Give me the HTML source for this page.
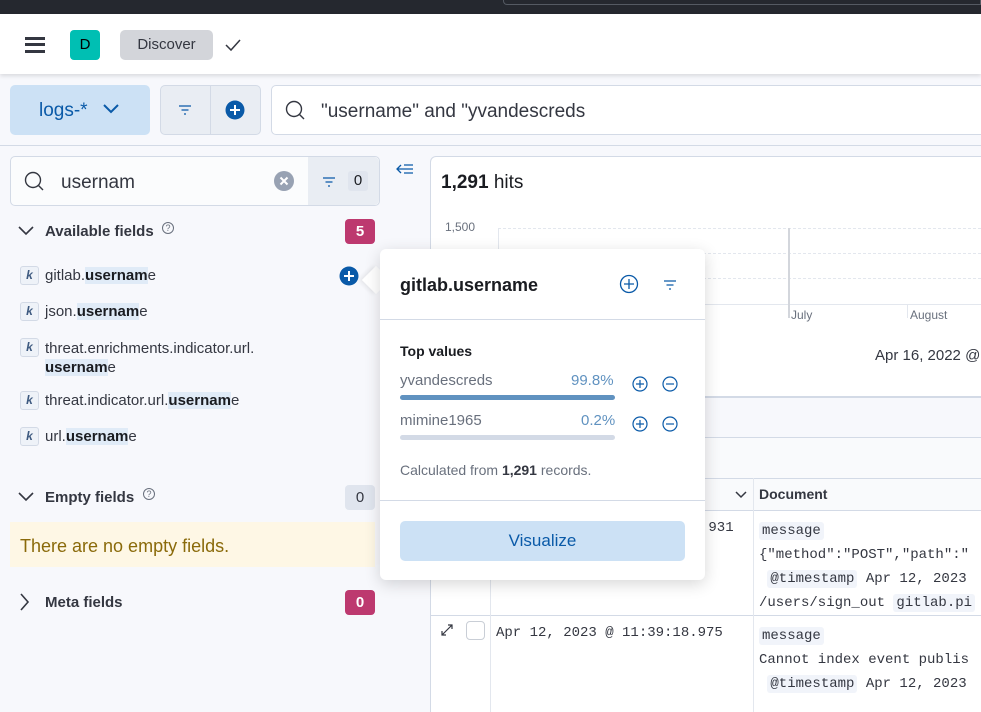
<!DOCTYPE html>
<html style="width:981px;height:712px;overflow:hidden"><head><meta charset="utf-8"><style>
*{box-sizing:border-box;margin:0;padding:0}
body{width:981px;height:712px;overflow:hidden;background:#f7f8fc;font-family:"Liberation Sans",sans-serif;color:#343741;position:relative}
.a{position:absolute}
.mono{font-family:"Liberation Mono",monospace}
.hl{background:#e0ebf7;font-weight:bold;color:#1a1c21}
.k{position:absolute;left:20px;width:19px;height:19px;border:1px solid #d3dae6;border-radius:3px;background:#eef2f8;color:#3e5a80;font-size:12px;font-weight:bold;font-style:italic;text-align:center;line-height:17px}
.fl{position:absolute;left:45px;font-size:15px;color:#343741}
.sec{position:absolute;left:45px;font-size:15px;font-weight:bold;color:#343741}
.badge{position:absolute;left:345px;width:30px;height:25px;border-radius:4px;text-align:center;line-height:25px;font-size:15px;font-weight:bold}
.tag{background:#f1f4fa;border-radius:3px;padding:1px 3px}
</style></head><body>
<div class="a" style="left:0;top:0;width:981px;height:14px;background:#25282f"></div>
<div class="a" style="left:503px;top:0;width:478px;height:5px;border:1px solid #555a63;border-top:none;border-radius:0 0 0 4px"></div>
<div class="a" style="left:0;top:14px;width:981px;height:60px;background:#fff;box-shadow:0 2px 4px rgba(0,0,0,.12)"></div>
<div class="a" style="left:25px;top:37px;width:20px;height:3px;background:#343741"></div>
<div class="a" style="left:25px;top:43px;width:20px;height:3px;background:#343741"></div>
<div class="a" style="left:25px;top:50px;width:20px;height:3px;background:#343741"></div>
<div class="a" style="left:70px;top:30px;width:30px;height:30px;border-radius:4px;background:#00bfb3;font-size:15px;text-align:center;line-height:30px;color:#000">D</div>
<div class="a" style="left:120px;top:30px;width:93px;height:30px;border-radius:5px;background:#d3d5da;font-size:15px;text-align:center;line-height:30px;color:#343741">Discover</div>
<svg class="a" style="left:224px;top:37px" width="18" height="16"><path d="M2 8l5 5 9-10" fill="none" stroke="#343741" stroke-width="1.5"/></svg>

<div class="a" style="left:10px;top:85px;width:140px;height:50px;border-radius:5px;background:#cce1f5;color:#0b64dd"></div>
<div class="a" style="left:39px;top:100px;font-size:19px;color:#0a5aa8">logs-*</div>
<svg class="a" style="left:102px;top:103px" width="18" height="12"><path d="M2 2l7 7 7-7" fill="none" stroke="#0a5aa8" stroke-width="2"/></svg>
<div class="a" style="left:160px;top:85px;width:101px;height:50px;border-radius:5px;background:#e9edf3;border:1px solid #d3dae6"></div>
<div class="a" style="left:210px;top:86px;width:1px;height:48px;background:#d3dae6"></div>
<svg class="a" style="left:177px;top:104px" width="16" height="12"><path d="M2 2h12M4.5 6h7M7 10h2" stroke="#0a5aa8" stroke-width="1.3"/></svg>
<svg class="a" style="left:225px;top:100px" width="20" height="20"><circle cx="10" cy="10" r="9.5" fill="#0a5aa8"/><path d="M10 5v10M5 10h10" stroke="#fff" stroke-width="2"/></svg>
<div class="a" style="left:271px;top:85px;width:720px;height:50px;border-radius:5px;background:#fff;border:1px solid #d3dae6"></div>
<svg class="a" style="left:285px;top:100px" width="22" height="22"><circle cx="9" cy="9" r="7.5" fill="none" stroke="#343741" stroke-width="1.4"/><path d="M14 14l5 5" stroke="#343741" stroke-width="1.4"/></svg>
<div class="a" style="left:321px;top:101px;font-size:19px;color:#343741">"username" and "yvandescreds</div>
<div class="a" style="left:0;top:145px;width:981px;height:1px;background:#d3dae6"></div>

<div class="a" style="left:10px;top:156px;width:370px;height:50px;border-radius:5px;background:#fbfcfd;border:1px solid #d3dae6"></div>
<div class="a" style="left:308px;top:157px;width:71px;height:48px;background:#e9edf3;border-radius:0 5px 5px 0"></div>
<svg class="a" style="left:24px;top:171px" width="22" height="22"><circle cx="9" cy="9" r="7.5" fill="none" stroke="#343741" stroke-width="1.4"/><path d="M14 14l5 5" stroke="#343741" stroke-width="1.4"/></svg>
<div class="a" style="left:61px;top:172px;font-size:19px;color:#343741">usernam</div>
<svg class="a" style="left:274px;top:171px" width="20" height="20"><circle cx="10" cy="10" r="10" fill="#98a2b3"/><path d="M6.5 6.5l7 7M13.5 6.5l-7 7" stroke="#fff" stroke-width="2"/></svg>
<svg class="a" style="left:321px;top:176px" width="16" height="12"><path d="M2 2h12M4.5 6h7M7 10h2" stroke="#0a5aa8" stroke-width="1.3"/></svg>
<div class="a" style="left:348px;top:171px;width:20px;height:20px;background:#e0e5ee;border-radius:3px;font-size:15px;text-align:center;line-height:20px;color:#1a1c21">0</div>
<svg class="a" style="left:395px;top:163px" width="20" height="14"><path d="M6 2L2 6l4 4M2 6h16M9 2h9M9 10h9" fill="none" stroke="#0a5aa8" stroke-width="1.3"/></svg>

<svg class="a" style="left:17px;top:225px" width="18" height="12"><path d="M2 2l7 7 7-7" fill="none" stroke="#343741" stroke-width="1.6"/></svg>
<div class="sec" style="top:223px">Available fields</div>
<div class="a" style="left:162px;top:222px;width:12px;height:12px;border:1px solid #69707d;border-radius:50%;font-size:9px;text-align:center;line-height:10px;color:#69707d">?</div>
<div class="badge" style="top:219px;background:#bd396f;color:#fff">5</div>

<div class="k" style="top:266px">k</div><div class="fl" style="top:267px">gitlab.<span class="hl">usernam</span>e</div>
<svg class="a" style="left:339px;top:266px" width="20" height="20"><circle cx="10" cy="10" r="9.5" fill="#0a5aa8"/><path d="M10 5v10M5 10h10" stroke="#fff" stroke-width="2"/></svg>
<div class="k" style="top:302px">k</div><div class="fl" style="top:303px">json.<span class="hl">usernam</span>e</div>
<div class="k" style="top:338px">k</div><div class="fl" style="top:339px;line-height:19px">threat.enrichments.indicator.url.<br><span class="hl">usernam</span>e</div>
<div class="k" style="top:391px">k</div><div class="fl" style="top:392px">threat.indicator.url.<span class="hl">usernam</span>e</div>
<div class="k" style="top:427px">k</div><div class="fl" style="top:428px">url.<span class="hl">usernam</span>e</div>

<svg class="a" style="left:17px;top:491px" width="18" height="12"><path d="M2 2l7 7 7-7" fill="none" stroke="#343741" stroke-width="1.6"/></svg>
<div class="sec" style="top:489px">Empty fields</div>
<div class="a" style="left:143px;top:488px;width:12px;height:12px;border:1px solid #69707d;border-radius:50%;font-size:9px;text-align:center;line-height:10px;color:#69707d">?</div>
<div class="badge" style="top:485px;background:#e0e5ee;color:#343741;font-weight:normal">0</div>
<div class="a" style="left:10px;top:522px;width:365px;height:45px;background:#fef7e5"></div>
<div class="a" style="left:20px;top:536px;font-size:18px;color:#8a6a0a">There are no empty fields.</div>
<svg class="a" style="left:18px;top:592px" width="12" height="20"><path d="M3 2l7 8-7 8" fill="none" stroke="#343741" stroke-width="1.6"/></svg>
<div class="sec" style="top:594px">Meta fields</div>
<div class="badge" style="top:590px;background:#bd396f;color:#fff">0</div>

<div class="a" style="left:430px;top:156px;width:560px;height:556px;background:#fff;border:1px solid #d3dae6;border-bottom:none;border-radius:6px 6px 0 0"></div>
<div class="a" style="left:441px;top:172px;font-size:19px;color:#1a1c21"><b>1,291</b> hits</div>
<div class="a" style="left:445px;top:220px;font-size:12px;color:#69707d">1,500</div>
<div class="a" style="left:498px;top:228px;width:483px;border-top:1px dashed #e3e7ee"></div>
<div class="a" style="left:498px;top:253px;width:483px;border-top:1px dashed #e3e7ee"></div>
<div class="a" style="left:498px;top:278px;width:483px;border-top:1px dashed #e3e7ee"></div>
<div class="a" style="left:498px;top:228px;width:1px;height:76px;background:#e3e7ee"></div>
<div class="a" style="left:498px;top:304px;width:483px;height:1px;background:#e3e7ee"></div>
<div class="a" style="left:788px;top:228px;width:2px;height:90px;background:#d3d6dc"></div>
<div class="a" style="left:791px;top:308px;font-size:12px;color:#69707d">July</div>
<div class="a" style="left:907px;top:304px;width:1px;height:14px;background:#e3e7ee"></div>
<div class="a" style="left:910px;top:308px;font-size:12px;color:#69707d">August</div>
<div class="a" style="left:875px;top:347px;font-size:15px;color:#343741">Apr 16, 2022 @</div>
<div class="a" style="left:431px;top:396px;width:550px;height:2px;background:#d3dae6"></div>
<div class="a" style="left:431px;top:398px;width:550px;height:39px;background:#f7f8fc"></div>
<div class="a" style="left:431px;top:437px;width:550px;height:1px;background:#d3dae6"></div>
<div class="a" style="left:431px;top:438px;width:550px;height:40px;background:#f9fafc"></div>
<div class="a" style="left:431px;top:478px;width:550px;height:1px;background:#d3dae6"></div>
<div class="a" style="left:431px;top:479px;width:550px;height:31px;background:#f9fafc"></div>
<div class="a" style="left:431px;top:510px;width:550px;height:1px;background:#d3dae6"></div>
<div class="a" style="left:431px;top:615px;width:550px;height:1px;background:#d3dae6"></div>
<div class="a" style="left:490px;top:478px;width:1px;height:234px;background:#e3e7ee"></div>
<div class="a" style="left:753px;top:478px;width:1px;height:234px;background:#e3e7ee"></div>
<svg class="a" style="left:734px;top:490px" width="14" height="10"><path d="M2 2l5 5 5-5" fill="none" stroke="#343741" stroke-width="1.5"/></svg>
<div class="a" style="left:759px;top:486px;font-size:14px;font-weight:bold;color:#343741">Document</div>
<div class="a mono" style="left:700px;top:520px;font-size:14px;color:#343741">.931</div>
<div class="a mono" style="left:759px;top:519px;font-size:14px;line-height:24px;color:#343741;white-space:nowrap"><span class="tag">message</span><br>{"method":"POST","path":"<br>&nbsp;<span class="tag">@timestamp</span> Apr 12, 2023<br>/users/sign_out <span class="tag">gitlab.pi</span></div>
<svg class="a" style="left:440px;top:623px" width="14" height="14"><path d="M2 12L12 2M8 2h4v4M2 8v4h4" fill="none" stroke="#343741" stroke-width="1.2"/></svg>
<div class="a" style="left:466px;top:621px;width:19px;height:19px;border:1px solid #c9ced6;border-radius:4px;background:#fff"></div>
<div class="a mono" style="left:496px;top:625px;font-size:14px;color:#343741">Apr 12, 2023 @ 11:39:18.975</div>
<div class="a mono" style="left:759px;top:624px;font-size:14px;line-height:24px;color:#343741;white-space:nowrap"><span class="tag">message</span><br>Cannot index event publis<br>&nbsp;<span class="tag">@timestamp</span> Apr 12, 2023</div>

<div class="a" style="left:366px;top:270px;width:20px;height:20px;background:#fff;transform:rotate(45deg);box-shadow:-2px 2px 4px rgba(0,0,0,.08)"></div>
<div class="a" style="left:380px;top:249px;width:325px;height:331px;background:#fff;border-radius:6px;box-shadow:0 4px 16px rgba(0,0,0,.16)"></div>
<div class="a" style="left:400px;top:275px;font-size:18px;font-weight:bold;color:#1a1c21">gitlab.username</div>
<svg class="a" style="left:619px;top:274px" width="20" height="20"><circle cx="10" cy="10" r="8.5" fill="none" stroke="#0a5aa8" stroke-width="1.3"/><path d="M10 5v10M5 10h10" stroke="#0a5aa8" stroke-width="1.3"/></svg>
<svg class="a" style="left:662px;top:279px" width="16" height="12"><path d="M2 2h12M4.5 6h7M7 10h2" stroke="#0a5aa8" stroke-width="1.3"/></svg>
<div class="a" style="left:380px;top:319px;width:325px;height:1px;background:#d3dae6"></div>
<div class="a" style="left:400px;top:343px;font-size:14px;font-weight:bold;color:#1a1c21">Top values</div>
<div class="a" style="left:400px;top:372px;font-size:15px;color:#69707d">yvandescreds</div>
<div class="a" style="left:571px;top:372px;font-size:15px;color:#6092c0">99.8%</div>
<div class="a" style="left:400px;top:395px;width:215px;height:5px;border-radius:3px;background:#6092c0"></div>
<div class="a" style="left:400px;top:412px;font-size:15px;color:#69707d">mimine1965</div>
<div class="a" style="left:581px;top:412px;font-size:15px;color:#6092c0">0.2%</div>
<div class="a" style="left:400px;top:435px;width:215px;height:5px;border-radius:3px;background:#d3dae6"></div>
<svg class="a" style="left:632px;top:376px" width="16" height="16"><circle cx="8" cy="8" r="7" fill="none" stroke="#0a5aa8" stroke-width="1.2"/><path d="M8 4v8M4 8h8" stroke="#0a5aa8" stroke-width="1.2"/></svg>
<svg class="a" style="left:662px;top:376px" width="16" height="16"><circle cx="8" cy="8" r="7" fill="none" stroke="#0a5aa8" stroke-width="1.2"/><path d="M4 8h8" stroke="#0a5aa8" stroke-width="1.2"/></svg>
<svg class="a" style="left:632px;top:416px" width="16" height="16"><circle cx="8" cy="8" r="7" fill="none" stroke="#0a5aa8" stroke-width="1.2"/><path d="M8 4v8M4 8h8" stroke="#0a5aa8" stroke-width="1.2"/></svg>
<svg class="a" style="left:662px;top:416px" width="16" height="16"><circle cx="8" cy="8" r="7" fill="none" stroke="#0a5aa8" stroke-width="1.2"/><path d="M4 8h8" stroke="#0a5aa8" stroke-width="1.2"/></svg>
<div class="a" style="left:400px;top:462px;font-size:14px;color:#69707d">Calculated from <b style="color:#343741">1,291</b> records.</div>
<div class="a" style="left:380px;top:500px;width:325px;height:1px;background:#d3dae6"></div>
<div class="a" style="left:400px;top:521px;width:285px;height:40px;border-radius:5px;background:#cce1f5;text-align:center;line-height:40px;font-size:17px;color:#0a5aa8">Visualize</div>
</body></html>
